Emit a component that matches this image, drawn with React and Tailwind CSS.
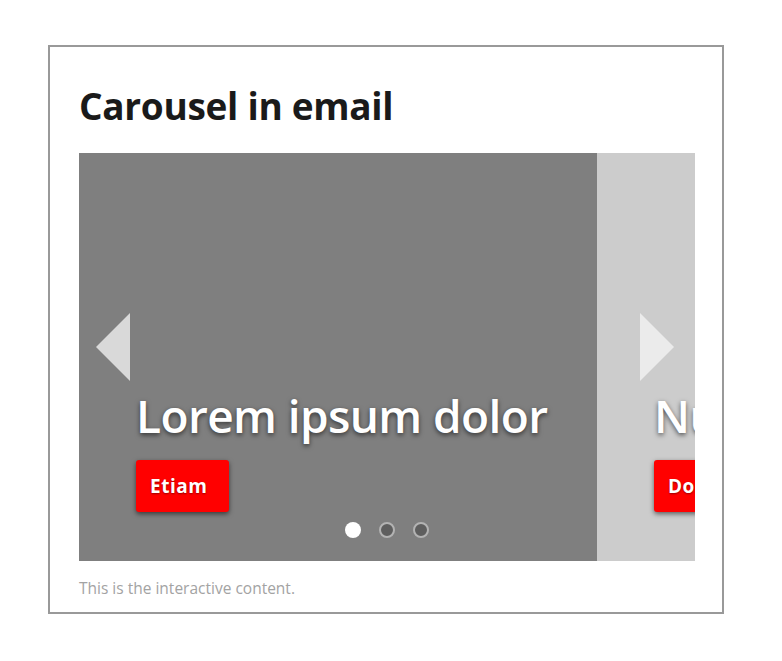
import React from 'react';

const font = { fontFamily: '"Open Sans", "Noto Sans", sans-serif' };

function Slide({ title, cta, bg }) {
  return (
    <div className={`relative shrink-0 w-[518px] h-full ${bg}`}>
      <div className="absolute left-[57px] top-[239px]">
        <h2 className="text-[46px] font-semibold leading-none text-white tracking-[-0.6px] whitespace-nowrap [text-shadow:0_2px_5px_rgba(0,0,0,0.6)]">
          {title}
        </h2>
        <button className="mt-[22px] h-[52px] w-[93px] rounded-[3px] bg-[#ff0000] text-white text-[19px] font-bold tracking-[0.5px] shadow-[0_2px_5px_rgba(0,0,0,0.55)] [text-shadow:0_1px_2px_rgba(0,0,0,0.4)] text-left pl-[14px] whitespace-nowrap overflow-hidden">
          {cta}
        </button>
      </div>
    </div>
  );
}

export default function App() {
  return (
    <div className="min-h-screen bg-white pt-[45px] pl-[48px]" style={font}>
      <div className="w-[676px] h-[569px] border-2 border-[#999999] pl-[29px] pt-[40px]">
        <h1 className="text-[37px] font-bold leading-none text-[#1a1a1a] tracking-[-0.3px]">Carousel in email</h1>

        {/* carousel */}
        <div className="relative mt-[29px] w-[616px] h-[408px] overflow-hidden flex">
          <Slide title="Lorem ipsum dolor" cta="Etiam" bg="bg-[#7f7f7f]" />
          <Slide title="Nunc" cta="Donec" bg="bg-[#cccccc]" />

          {/* arrows */}
          <div className="absolute left-[17px] top-[160px] w-0 h-0 border-y-[34px] border-y-transparent border-r-[34px] border-r-[#d9d9d9]" />
          <div className="absolute left-[561px] top-[160px] w-0 h-0 border-y-[34px] border-y-transparent border-l-[34px] border-l-[#ebebeb]" />

          {/* dots */}
          <div className="absolute left-[266px] top-[369px] flex gap-[18px]">
            <span className="w-4 h-4 rounded-full bg-white" />
            <span className="w-4 h-4 rounded-full bg-[#5e5e5e] border-2 border-[#b3b3b3]" />
            <span className="w-4 h-4 rounded-full bg-[#5e5e5e] border-2 border-[#b3b3b3]" />
          </div>
        </div>

        <p className="mt-[20px] text-[15.5px] text-[#a3a3a3] leading-none">This is the interactive content.</p>
      </div>
    </div>
  );
}
